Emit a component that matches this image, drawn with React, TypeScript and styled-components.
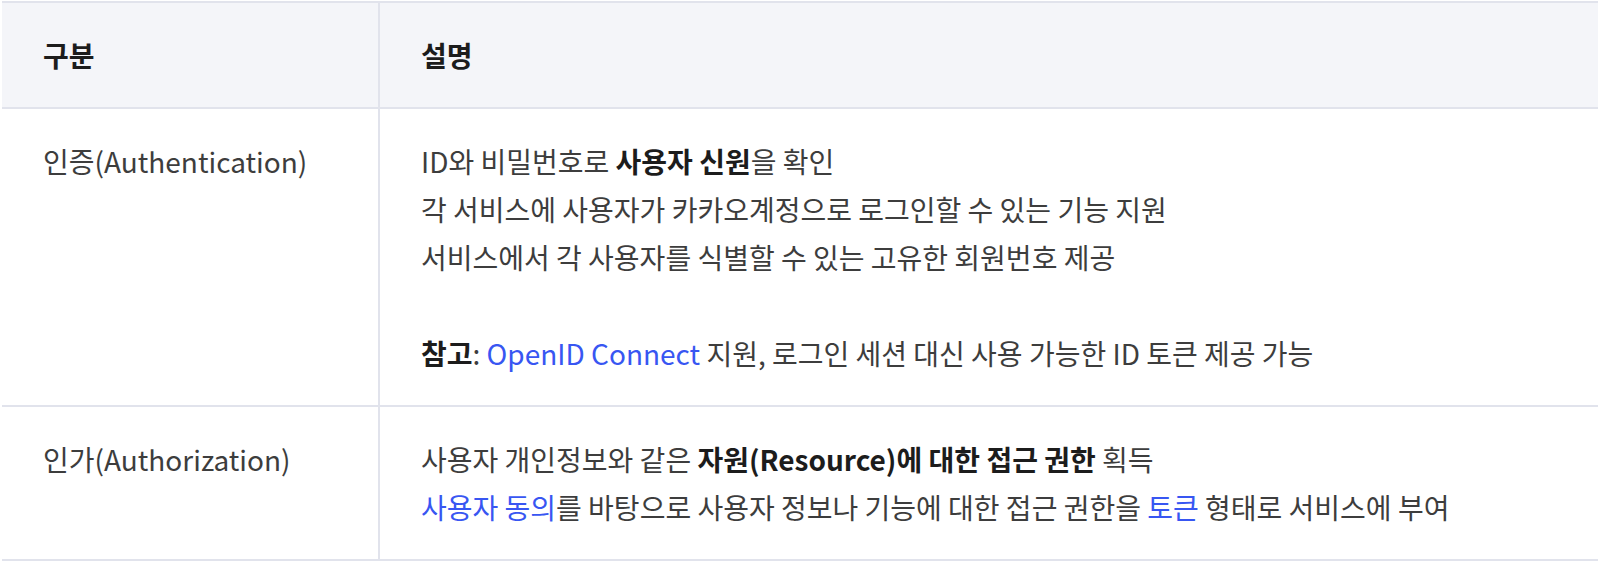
import styled, { createGlobalStyle } from "styled-components";

const GlobalStyle = createGlobalStyle`
  html, body {
    margin: 0;
    padding: 0;
    background: #ffffff;
  }
  body {
    font-family: "Noto Sans CJK KR", "Noto Sans", sans-serif;
  }
`;

const Page = styled.div`
  padding: 1px 6px 0 2px;
`;

const Table = styled.table`
  width: 100%;
  table-layout: fixed;
  border-collapse: collapse;
  font-size: 28px;
  line-height: 48px;
  color: #3d3d3d;
`;

const TermCol = styled.col`
  width: 377px;
`;

const Head = styled.thead`
  background: #f4f5f9;
`;

const HeadCell = styled.th<{ $first?: boolean }>`
  padding: 28px 40px 28px 41px;
  border-top: 2px solid #e1e3ec;
  border-bottom: 2px solid #e1e3ec;
  border-right: ${(props) => (props.$first ? "2px solid #e1e3ec" : "none")};
  text-align: left;
  font-weight: 700;
  color: #1c1c1c;
  white-space: nowrap;
`;

const Cell = styled.td<{ $first?: boolean }>`
  padding: 28px 40px 28px 41px;
  border-bottom: 2px solid #e1e3ec;
  border-right: ${(props) => (props.$first ? "2px solid #e1e3ec" : "none")};
  vertical-align: top;
  text-align: left;
  white-space: nowrap;
`;

const Strong = styled.b`
  font-weight: 700;
  color: #1c1c1c;
`;

const Link = styled.a`
  color: #3856f2;
  text-decoration: none;
`;

const rows = [
  {
    term: "인증(Authentication)",
    body: (
      <>
        ID와 비밀번호로 <Strong>사용자 신원</Strong>을 확인
        <br />
        각 서비스에 사용자가 카카오계정으로 로그인할 수 있는 기능 지원
        <br />
        서비스에서 각 사용자를 식별할 수 있는 고유한 회원번호 제공
        <br />
        <br />
        <Strong>참고</Strong>: <Link href="#">OpenID Connect</Link> 지원, 로그인
        세션 대신 사용 가능한 ID 토큰 제공 가능
      </>
    ),
  },
  {
    term: "인가(Authorization)",
    body: (
      <>
        사용자 개인정보와 같은 <Strong>자원(Resource)에 대한 접근 권한</Strong>{" "}
        획득
        <br />
        <Link href="#">사용자 동의</Link>를 바탕으로 사용자 정보나 기능에 대한
        접근 권한을 <Link href="#">토큰</Link> 형태로 서비스에 부여
      </>
    ),
  },
];

const App = () => {
  return (
    <Page>
      <GlobalStyle />
      <Table>
        <colgroup>
          <TermCol />
          <col />
        </colgroup>
        <Head>
          <tr>
            <HeadCell $first>구분</HeadCell>
            <HeadCell>설명</HeadCell>
          </tr>
        </Head>
        <tbody>
          {rows.map((row) => (
            <tr key={row.term}>
              <Cell $first>{row.term}</Cell>
              <Cell>{row.body}</Cell>
            </tr>
          ))}
        </tbody>
      </Table>
    </Page>
  );
};

export default App;
